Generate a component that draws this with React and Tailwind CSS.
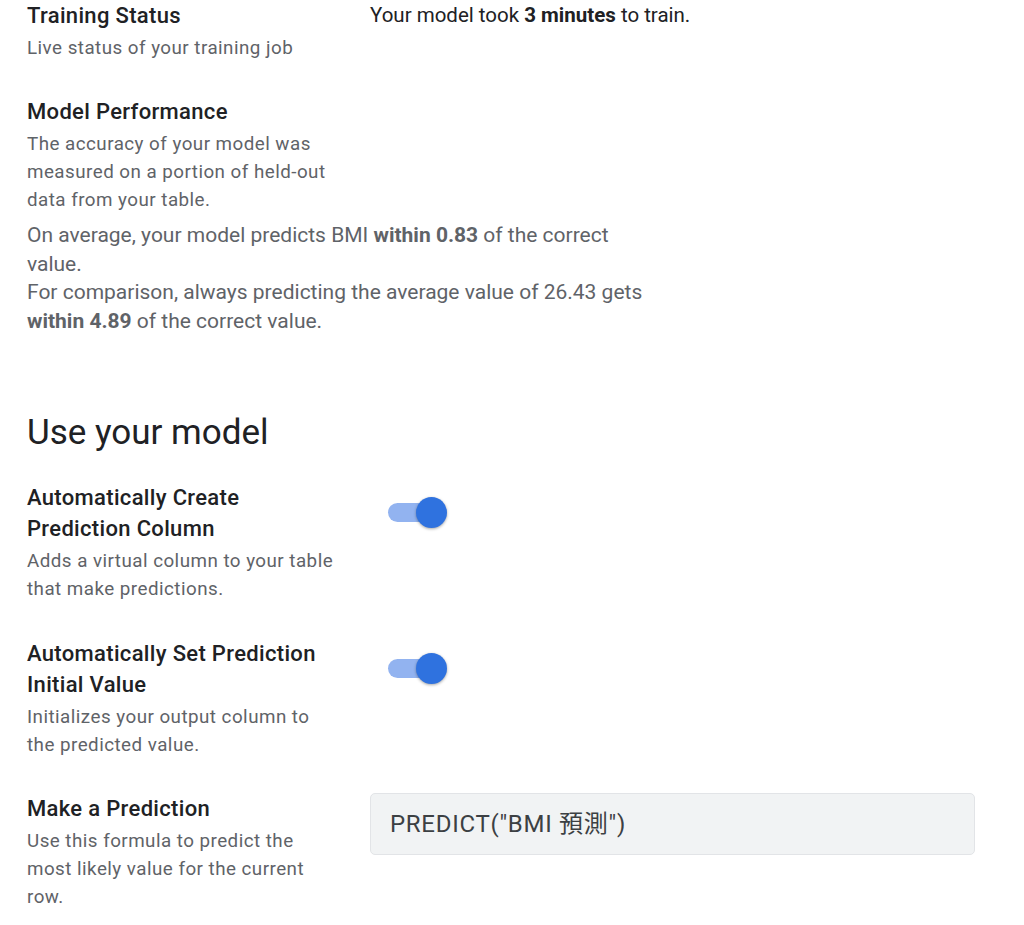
import React from "react";

const Toggle = () => (
  <div className="relative mt-[15px] ml-[18px] h-[31px] w-[59px]">
    <div className="absolute left-0 top-[6px] h-[19px] w-[52px] rounded-full bg-[#92b3f0]" />
    <div className="absolute left-[28px] top-0 h-[31px] w-[31px] rounded-full bg-[#2f72df] shadow-[0_1px_3px_rgba(0,0,0,0.35)]" />
  </div>
);

const Row = ({ title, desc, children, className = "" }) => (
  <div className={"grid grid-cols-[343px_1fr] " + className}>
    <div className="w-[308px]">
      <h3 className="text-[22px] leading-[31px] font-medium text-[#202124] tracking-[0.015em]">
        {title}
      </h3>
      <p className="mt-[3px] text-[18.8px] leading-[28px] text-[#5f6368] tracking-[0.025em]">{desc}</p>
    </div>
    <div>{children}</div>
  </div>
);

export default function App() {
  return (
    <div className="min-h-screen bg-white pl-[27px] font-['Roboto','Noto_Sans_CJK_TC',sans-serif]">
      {/* Entrenamiento */}
      <Row title="Training Status" desc="Live status of your training job">
        <p className="text-[20.5px] leading-[31px] text-[#202124]">
          Your model took <strong className="font-bold">3 minutes</strong> to train.
        </p>
      </Row>

      {/* Rendimiento */}
      <div className="mt-[34px]">
        <Row
          title="Model Performance"
          desc="The accuracy of your model was measured on a portion of held-out data from your table."
        />
        <div className="mt-[7px] w-[625px] text-[21px] leading-[28.5px] text-[#5f6368]">
          <p>
            On average, your model predicts BMI <strong className="font-bold">within 0.83</strong> of the correct value.
          </p>
          <p>
            For comparison, always predicting the average value of 26.43 gets{" "}
            <strong className="font-bold">within 4.89</strong> of the correct value.
          </p>
        </div>
      </div>

      <h2 className="mt-[78px] text-[35px] leading-[40px] text-[#202124]">Use your model</h2>

      <Row
        className="mt-[29px]"
        title="Automatically Create Prediction Column"
        desc="Adds a virtual column to your table that make predictions."
      >
        <Toggle />
      </Row>

      <Row
        className="mt-[35px]"
        title="Automatically Set Prediction Initial Value"
        desc="Initializes your output column to the predicted value."
      >
        <Toggle />
      </Row>

      <Row
        className="mt-[34px]"
        title="Make a Prediction"
        desc="Use this formula to predict the most likely value for the current row."
      >
        <div className="flex h-[62px] w-[605px] items-center rounded-[5px] border border-[#e2e4e7] bg-[#f1f3f4] px-[19px] text-[24px] tracking-[0.03em] text-[#3c4043]">
          PREDICT("BMI 預測")
        </div>
      </Row>
    </div>
  );
}
